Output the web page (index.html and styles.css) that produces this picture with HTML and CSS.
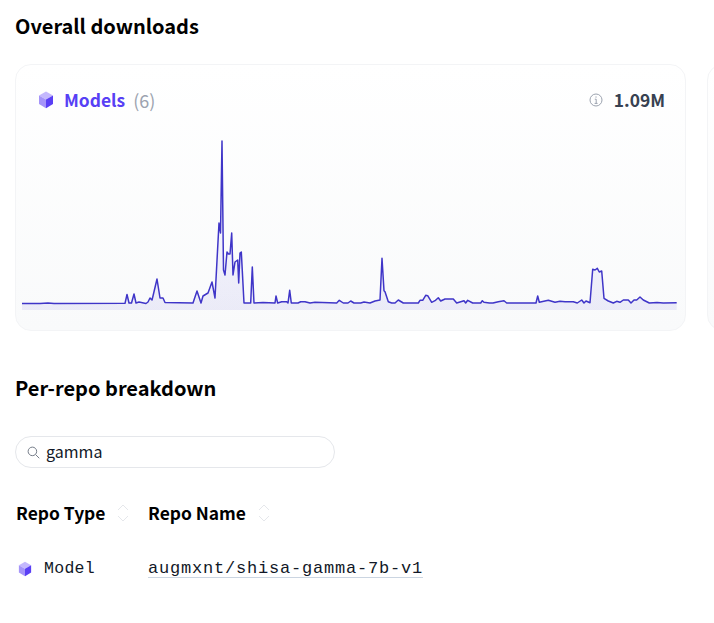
FILE: index.html
```html
<!DOCTYPE html>
<html lang="en">
<head>
<meta charset="utf-8">
<title>Overall downloads</title>
<link rel="stylesheet" href="styles.css">
</head>
<body>
<section class="overall">
  <h2 class="heading">Overall downloads</h2>
  <div class="cards">
    <article class="card">
      <header class="card-head">
        <svg class="cube cube-lg" viewBox="0 0 16 18" aria-hidden="true">
          <path class="cube-top" d="M8 .6l7 4-7 4-7-4z"/>
          <path class="cube-left" d="M1 4.6l7 4v8.6l-7-4.2z"/>
          <path class="cube-right" d="M15 4.6l-7 4v8.6l7-4.2z"/>
        </svg>
        <span class="card-title">Models</span>
        <span class="card-count">(6)</span>
        <svg class="info" viewBox="0 0 14 14" aria-hidden="true">
          <circle cx="7" cy="7" r="6" fill="none" stroke="currentColor" stroke-width="1"/>
          <path d="M7 3.4v1.3M5.8 6.2H7.2V10.4M5.6 10.4h3" fill="none" stroke="currentColor" stroke-width="1"/>
        </svg>
        <span class="card-total">1.09M</span>
      </header>
      <svg class="chart" viewBox="22 130 655 180" aria-hidden="true">
        <defs>
          <linearGradient id="area" x1="0" y1="0" x2="0" y2="1">
            <stop offset="0" stop-color="#4f46e5" stop-opacity="0.02"/>
            <stop offset="0.55" stop-color="#4f46e5" stop-opacity="0.05"/>
            <stop offset="1" stop-color="#4338ca" stop-opacity="0.08"/>
          </linearGradient>
        </defs>
        <path class="chart-area" fill="url(#area)" d="M22 310V303.5L40 303.4 48 303 54 303.4 125 303.3 127 294.5 129 303 131.5 303 134 294 136 303 139 302 146 303.5 148 302 150 298 152 300 153 296 157 279 160 298 163 298 165 302.5 193 303 197 291 201 303 203 296 208 293 212 282 215 298 219 223 220.5 233 222 141 223.5 270 225 275 227 252 228.5 254 230 254 231.7 233 233 275 235 262 237.7 260 238.7 283 240 253 241.3 252 244 303 250.7 303 252.3 267 254 303 263 302.6 275 303 276 296 277.7 303 281.7 301.7 286.7 301.7 288 303 289.7 290.3 291.3 303 298 303 300.7 301.7 305 301.7 310 303 315 302.3 336.7 303 339.3 300.3 343.3 303 348 303 350.7 301 354 303 360.7 303 364 302 370 303 375 301 380 300 382 258.3 384 290.7 385 291.7 388.3 301.7 391.7 303 395 303 398.3 300 403.3 303 418.3 303 420 300.3 422.7 300.3 425.7 295.3 427.7 295.7 431.7 302.3 435 300.7 438.3 297.7 440.7 301 445 299 453.3 299 456.7 303 464 300.7 465.7 303 467.7 300.3 472.7 303 480.7 303 482.3 300.7 484 302.3 489.3 303 493 303 498.3 301.7 504 300.7 506.7 303 536 303 537.7 296 539.3 302.3 548.3 300.3 555 302.3 560 301.3 565 301.7 573.3 301.7 577.3 303 581.7 300 584 303 586 301 590 302.7 592.7 269.3 595 270 597.3 268.3 599.3 272 601.7 271 604 298.3 608.3 301 613.3 303 616.7 301.3 620 302.3 623.3 300 628.3 300 631 303 634 300 636.7 300 640 297 643.3 300 649.3 303 657 302.4 663.3 303 676.7 302.7V310z"/>
        <polyline class="chart-line" points="22,303.5 40,303.4 48,303 54,303.4 125,303.3 127,294.5 129,303 131.5,303 134,294 136,303 139,302 146,303.5 148,302 150,298 152,300 153,296 157,279 160,298 163,298 165,302.5 193,303 197,291 201,303 203,296 208,293 212,282 215,298 219,223 220.5,233 222,141 223.5,270 225,275 227,252 228.5,254 230,254 231.7,233 233,275 235,262 237.7,260 238.7,283 240,253 241.3,252 244,303 250.7,303 252.3,267 254,303 263,302.6 275,303 276,296 277.7,303 281.7,301.7 286.7,301.7 288,303 289.7,290.3 291.3,303 298,303 300.7,301.7 305,301.7 310,303 315,302.3 336.7,303 339.3,300.3 343.3,303 348,303 350.7,301 354,303 360.7,303 364,302 370,303 375,301 380,300 382,258.3 384,290.7 385,291.7 388.3,301.7 391.7,303 395,303 398.3,300 403.3,303 418.3,303 420,300.3 422.7,300.3 425.7,295.3 427.7,295.7 431.7,302.3 435,300.7 438.3,297.7 440.7,301 445,299 453.3,299 456.7,303 464,300.7 465.7,303 467.7,300.3 472.7,303 480.7,303 482.3,300.7 484,302.3 489.3,303 493,303 498.3,301.7 504,300.7 506.7,303 536,303 537.7,296 539.3,302.3 548.3,300.3 555,302.3 560,301.3 565,301.7 573.3,301.7 577.3,303 581.7,300 584,303 586,301 590,302.7 592.7,269.3 595,270 597.3,268.3 599.3,272 601.7,271 604,298.3 608.3,301 613.3,303 616.7,301.3 620,302.3 623.3,300 628.3,300 631,303 634,300 636.7,300 640,297 643.3,300 649.3,303 657,302.4 663.3,303 676.7,302.7"/>
      </svg>
    </article>
    <article class="card card-next"></article>
  </div>
</section>
<section class="breakdown">
  <h2 class="heading">Per-repo breakdown</h2>
  <label class="search">
    <svg class="search-icon" viewBox="0 0 14 14" aria-hidden="true">
      <circle cx="5.8" cy="5.8" r="4.6" fill="none" stroke="currentColor" stroke-width="1"/>
      <path d="M9.2 9.2l4 4" fill="none" stroke="currentColor" stroke-width="1"/>
    </svg>
    <span class="search-value">gamma</span>
  </label>
  <div class="table">
    <div class="th">
      <span>Repo Type</span>
      <svg class="sort" viewBox="0 0 12 18" aria-hidden="true"><path d="M1 6l5-5 5 5M1 12l5 5 5-5"/></svg>
    </div>
    <div class="th">
      <span>Repo Name</span>
      <svg class="sort" viewBox="0 0 12 18" aria-hidden="true"><path d="M1 6l5-5 5 5M1 12l5 5 5-5"/></svg>
    </div>
    <div class="td td-type">
      <svg class="cube cube-sm" viewBox="0 0 16 18" aria-hidden="true">
        <path class="cube-top" d="M8 .6l7 4-7 4-7-4z"/>
        <path class="cube-left" d="M1 4.6l7 4v8.6l-7-4.2z"/>
        <path class="cube-right" d="M15 4.6l-7 4v8.6l7-4.2z"/>
      </svg>
      <span class="mono type-name">Model</span>
    </div>
    <div class="td"><a class="mono repo-link">augmxnt/shisa-gamma-7b-v1</a></div>
  </div>
</section>
</body>
</html>
```

FILE: styles.css
```css
html, body {
  margin: 0;
  padding: 0;
  overflow: hidden;
  background: #fff;
  height: 623px;
}
body {
  font-family: "Noto Sans CJK JP", "Noto Sans", sans-serif;
  color: #0b0f19;
  font-size: 16px;
  padding-left: 15px;
}
.heading {
  margin: 0;
  font-size: 20px;
  line-height: 28px;
  font-weight: 600;
  color: #000;
}
.overall {
  padding-top: 12px;
}
.cards {
  display: flex;
  gap: 21px;
  width: 699px;
  overflow: hidden;
  margin-top: 24px;
}
.card {
  flex: 0 0 671px;
  box-sizing: border-box;
  height: 267px;
  border: 1px solid #f3f4f6;
  border-radius: 16px;
  background: linear-gradient(to bottom, #fff, #f9fafb);
  padding: 0 8px 0 6px;
}
.card-head {
  display: flex;
  align-items: center;
  height: 24px;
  margin-top: 23px;
  padding: 0 12px 0 16px;
}
.cube {
  display: block;
  flex: none;
}
.cube-lg {
  width: 16px;
  height: 18px;
  margin-right: 10px;
}
.cube-sm {
  width: 14px;
  height: 16px;
  margin-right: 12px;
}
.cube-top { fill: #c4b8fd; }
.cube-left { fill: #a594f9; }
.cube-right { fill: #5a3ff5; }
.card-title {
  font-size: 17.4px;
  line-height: 24px;
  font-weight: 600;
  color: #5740f5;
  margin-right: 8px;
}
.card-count {
  font-size: 18px;
  line-height: 24px;
  color: #9ca3af;
}
.info {
  width: 14px;
  height: 14px;
  margin-left: auto;
  margin-right: 11px;
  color: #9ca3af;
}
.card-total {
  font-size: 17.4px;
  line-height: 24px;
  font-weight: 600;
  color: #374151;
}
.chart {
  display: block;
  width: 655px;
  height: 180px;
  margin-top: 18px;
}
.chart-line {
  fill: none;
  stroke: #3f35c8;
  stroke-width: 1.5;
  stroke-linejoin: round;
}
.breakdown {
  padding-top: 43px;
}
.search {
  display: flex;
  align-items: center;
  box-sizing: border-box;
  width: 320px;
  height: 32px;
  margin-top: 34px;
  padding-left: 11px;
  border: 1px solid #e5e7eb;
  border-radius: 16px;
  background: #fff;
}
.search-icon {
  width: 13px;
  height: 13px;
  margin-right: 6px;
  color: #6b7280;
}
.search-value {
  font-size: 16px;
  line-height: 24px;
  padding-bottom: 2px;
  color: #111827;
}
.table {
  display: grid;
  grid-template-columns: 132px 1fr;
  grid-template-rows: 32px 32px;
  row-gap: 24px;
  margin-top: 29px;
  padding-left: 1px;
}
.th {
  display: flex;
  align-items: center;
  font-size: 17.4px;
  font-weight: 600;
  line-height: 24px;
  color: #000;
}
.sort {
  width: 12px;
  height: 18px;
  margin-left: 12px;
  fill: none;
  stroke: #e5e7eb;
  stroke-width: 1;
}
.td {
  display: flex;
  align-items: center;
}
.td-type {
  padding-left: 2px;
}
.mono {
  font-family: "Liberation Mono", monospace;
  font-size: 17px;
  letter-spacing: 0.8px;
  line-height: 16px;
  color: #111827;
}
.type-name {
  font-size: 16.5px;
  letter-spacing: 0.3px;
}
.repo-link {
  border-bottom: 1px solid #cbd5e1;
}
```
